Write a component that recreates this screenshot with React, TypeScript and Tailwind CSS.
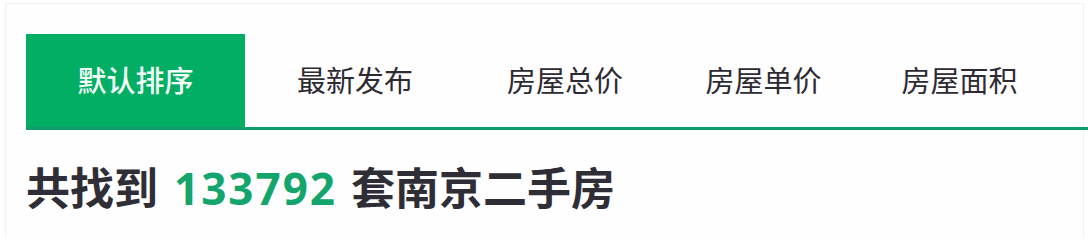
import React from "react";

const tabs = [
  { label: "默认排序", w: "w-[219px]", active: true },
  { label: "最新发布", w: "w-[220px]", active: false },
  { label: "房屋总价", w: "w-[200px]", active: false },
  { label: "房屋单价", w: "w-[197px]", active: false },
  { label: "房屋面积", w: "w-[195px]", active: false },
];

export default function App() {
  return (
    <div className="w-[1088px] h-[238px] bg-white overflow-hidden pt-[3px] pl-[5px] pr-[4px]">
      <div
        className="h-[260px] border border-[#f1f2f4] bg-[#fefefe] pt-[30px] pl-[20px]"
        style={{ fontFamily: '"Noto Sans", "Noto Sans CJK SC", sans-serif' }}
      >
        <div className="flex border-b-[3px] border-[#119c6e] h-[96px] mr-[-6px]">
          {tabs.map((t) => (
            <div
              key={t.label}
              className={`${t.w} shrink-0 flex items-center justify-center text-[29px] ${
                t.active ? "bg-[#02ad64] text-[#f4fff8] font-medium" : "text-[#2e2a33]"
              }`}
            >
              {t.label}
            </div>
          ))}
        </div>
        <div className="mt-[32px] text-[44px] leading-[52px] font-bold text-[#2f2d36] flex items-center">
          <span>共找到</span>
          <span className="ml-[16px] mr-[14px] text-[#14a56c] tracking-[2px]">133792</span>
          <span>套南京二手房</span>
        </div>
      </div>
    </div>
  );
}
